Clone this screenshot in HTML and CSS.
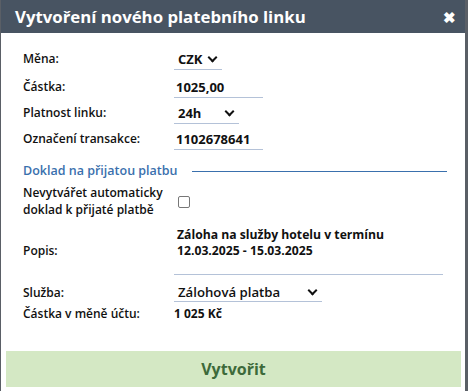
FILE: index.html
```html
<!DOCTYPE html>
<html lang="cs">
<head>
  <meta charset="UTF-8">
  <title>Vytvoření nového platebního linku</title>
  <link rel="stylesheet" href="styles.css">
</head>
<body>
  <div class="dialog">
    <div class="dialog-head">
      <h1>Vytvoření nového platebního linku</h1>
      <span class="close">✖</span>
    </div>

    <div class="dialog-body">
      <div class="row first">
        <label>Měna:</label>
        <div class="field select w-czk">CZK <span class="chev"></span></div>
      </div>
      <div class="row">
        <label>Částka:</label>
        <div class="field w-long">1025,00</div>
      </div>
      <div class="row">
        <label>Platnost linku:</label>
        <div class="field select w-mid">24h <span class="chev"></span></div>
      </div>
      <div class="row">
        <label>Označení transakce:</label>
        <div class="field w-long">1102678641</div>
      </div>

      <div class="section">
        <span>Doklad na přijatou platbu</span>
      </div>

      <div class="row-check">
        <label>Nevytvářet automaticky<br>doklad k přijaté platbě</label>
        <div class="check"></div>
      </div>

      <div class="row-popis">
        <label>Popis:</label>
        <div class="popis">Záloha na služby hotelu v termínu<br>12.03.2025 - 15.03.2025</div>
      </div>
      <div class="popis-line"></div>

      <div class="row-sluzba">
        <label>Služba:</label>
        <div class="field select big w-sluzba">Zálohová platba <span class="chev"></span></div>
      </div>
      <div class="row-castka">
        <label>Částka v měně účtu:</label>
        <div class="plain">1 025 Kč</div>
      </div>
    </div>

    <button class="create">Vytvořit</button>
  </div>
</body>
</html>
```

FILE: styles.css
```css
body {
  margin: 0;
  padding: 0;
  background: #5a5f66;
  font-family: 'Open Sans', 'Noto Sans', sans-serif;
  color: #111;
  height: 391px;
  overflow: hidden;
}

.dialog {
  width: 464px;
  height: 391px;
  margin-left: 1px;
  background: #fff;
  display: flex;
  flex-direction: column;
}

.dialog-head {
  background: #485462;
  height: 33px;
  display: flex;
  align-items: center;
  justify-content: space-between;
  padding: 0 9px 0 14px;
}

.dialog-head h1 {
  margin: 0;
  color: #fff;
  font-size: 16.8px;
  font-weight: 700;
}

.close {
  color: #fff;
  font-size: 15px;
  font-weight: 700;
}

.dialog-body {
  padding: 16px 22px 0 22px;
  flex: 1;
}

.dialog-body label {
  width: 151px;
  flex: none;
  font-size: 12px;
  font-weight: 600;
}

.row {
  display: flex;
  align-items: flex-start;
  height: 26px;
}

.row.first {
  height: 28px;
}

.row label {
  line-height: 20px;
}

.field {
  font-size: 13px;
  font-weight: 700;
  line-height: 20px;
  border-bottom: 1px solid #b4c2d8;
  padding-left: 2px;
  display: flex;
  align-items: center;
}

.select {
  padding-left: 4px;
  justify-content: space-between;
  padding-right: 6px;
}

.w-czk { width: 38px; }
.w-long { width: 87px; }
.w-mid { width: 55px; }
.w-sluzba { width: 138px; }

.chev {
  width: 5px;
  height: 5px;
  border-right: 2px solid #111;
  border-bottom: 2px solid #111;
  transform: rotate(45deg);
  margin-top: -4px;
}

.section {
  display: flex;
  align-items: center;
  margin-top: 7px;
  line-height: 18px;
  color: #3a70ad;
  font-size: 12.5px;
  font-weight: 600;
}

.section::after {
  content: '';
  flex: 1;
  border-top: 1px solid #3a70ad;
  margin-left: 14px;
  margin-right: -4px;
}

.row-check {
  display: flex;
  align-items: center;
  margin-top: 4px;
}

.row-check label {
  line-height: 17px;
}

.check {
  width: 10px;
  height: 10px;
  border: 1px solid #777;
  border-radius: 2px;
  margin: 2px 0 0 4px;
}

.row-popis {
  display: flex;
  align-items: flex-end;
  margin-top: 9px;
}

.row-popis label {
  line-height: 16px;
}

.popis {
  font-size: 12.2px;
  font-weight: 700;
  line-height: 16px;
  padding-left: 3px;
}

.popis-line {
  margin: 15px 0 0 151px;
  border-top: 1px solid #b4c2d8;
  width: 269px;
}

.row-sluzba {
  display: flex;
  align-items: flex-start;
  margin-top: 9px;
}

.row-sluzba label {
  line-height: 17px;
}

.big {
  font-size: 13.2px;
  font-weight: 600;
  line-height: 17px;
}

.row-castka {
  display: flex;
  align-items: center;
  margin-top: 4px;
  line-height: 16px;
}

.plain {
  font-size: 12px;
  font-weight: 700;
}

.create {
  margin: 0 4px 4px 5px;
  height: 36px;
  border: none;
  background: #d4e8c4;
  color: #3d6a3a;
  font-family: inherit;
  font-size: 16px;
  font-weight: 700;
}
```
